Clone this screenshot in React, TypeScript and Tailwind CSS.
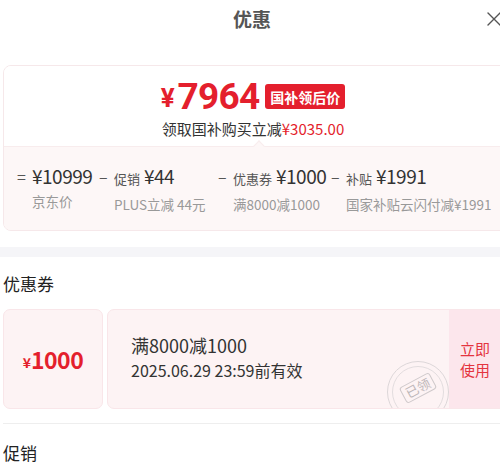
import React from "react";

const items = [
  { sign: "=", label: "", value: "¥10999", sub: "京东价", w: "w-[82px]" },
  { sign: "–", label: "促销", value: "¥44", sub: "PLUS立减 44元", w: "w-[119px]" },
  { sign: "–", label: "优惠券", value: "¥1000", sub: "满8000减1000", w: "w-[113px]" },
  { sign: "–", label: "补贴", value: "¥1991", sub: "国家补贴云闪付减¥1991", w: "w-[160px]" },
];

export default function App() {
  return (
    <div
      className="relative w-[500px] h-[476px] overflow-hidden bg-white"
      style={{ fontFamily: '"Noto Sans CJK SC", "Noto Sans", sans-serif' }}
    >
      {/* header */}
      <div className="relative h-[37px] flex items-center justify-center">
        <span className="text-[19px] font-bold leading-none text-[#555] ml-[4px]">优惠</span>
        <svg
          className="absolute left-[486px] top-[11px]"
          width="16"
          height="16"
          viewBox="0 0 16 16"
          fill="none"
          stroke="#555"
          strokeWidth="1.4"
          strokeLinecap="round"
        >
          <path d="M2 2 L14 14 M14 2 L2 14" />
        </svg>
      </div>

      {/* price card */}
      <div className="mt-[28px] ml-[3px] w-[510px] rounded-[8px] border border-[#f6e8ea] overflow-hidden">
        <div className="h-[80px] bg-white flex flex-col items-center pt-[13px] pr-[10px]">
          <div className="flex items-center h-[35px] font-[Roboto,sans-serif]">
            <span className="text-[#e41f2d] font-bold text-[26px] leading-[25px] mr-[3px] mt-[4px]">¥</span>
            <span className="text-[#e41f2d] font-bold text-[37px] leading-[32px] tracking-[-0.8px]">7964</span>
            <span
              className="ml-[6px] h-[25px] px-[5px] flex items-center rounded-[3px] bg-[#e41f2d] text-white text-[14px] font-bold leading-none"
              style={{ fontFamily: '"Noto Sans CJK SC", sans-serif' }}
            >
              国补领后价
            </span>
          </div>
          <div className="mt-[6px] text-[15px] leading-[18px] text-[#333]">
            领取国补购买立减<span className="text-[#e41f2d]">¥3035.00</span>
          </div>
        </div>
        <div className="relative h-[84px] bg-[#fdf7f7] border-t border-[#f8eced] pt-[17px] pl-[13px]">
          <div className="absolute left-[251px] top-[-5px] w-[8px] h-[8px] rotate-45 bg-[#fdf7f7] border-l border-t border-[#f8eced]" />
          <div className="flex">
            {items.map((it, i) => (
              <div key={i} className={`flex shrink-0 ${it.w}`}>
                <span className="w-[15px] shrink-0 text-[#555] text-[16px] leading-[24px]">{it.sign}</span>
                <div className="flex flex-col">
                  <div className="flex items-baseline whitespace-nowrap leading-[24px]">
                    {it.label && <span className="text-[13px] text-[#555] mr-[4px]">{it.label}</span>}
                    <span className="text-[19px] text-[#333] tracking-[-0.5px]">{it.value}</span>
                  </div>
                  <div className="mt-[4px] text-[13.5px] leading-[18px] text-[#999] whitespace-nowrap">{it.sub}</div>
                </div>
              </div>
            ))}
          </div>
        </div>
      </div>

      {/* gray band */}
      <div className="mt-[16px] h-[10px] bg-[#f5f5f8]" />

      {/* coupon heading */}
      <div className="mt-[17px] pl-[3px] text-[17px] leading-[20px] text-[#222]">优惠券</div>

      {/* coupon */}
      <div className="mt-[15px] ml-[3px] w-[510px] h-[100px] flex">
        <div className="w-[100px] h-full rounded-[7px] bg-[#fdf3f4] border border-[#f9e6e9] flex items-center justify-center">
          <span className="text-[#e41f2d] font-semibold text-[14px] leading-none mt-[5px]">¥</span>
          <span className="text-[#e41f2d] font-semibold text-[23px] leading-none tracking-[-0.5px]">1000</span>
        </div>
        <div className="relative ml-[4px] flex-1 h-full rounded-[7px] bg-[#fdf3f4] border border-[#f9e6e9] overflow-hidden flex">
          <div className="flex-1 pl-[23px] pt-[23px]">
            <div className="text-[18px] leading-[24px] text-[#333]">满8000减1000</div>
            <div className="mt-[3px] text-[16px] leading-[20px] text-[#333]">2025.06.29 23:59前有效</div>
          </div>
          {/* stamp */}
          <div className="absolute left-[279px] top-[51px] w-[62px] h-[62px] rounded-full border-[1.5px] border-[#dcd6d8] flex items-center justify-center">
            <div className="w-[52px] h-[52px] rounded-full border border-[#e2dcde] flex items-center justify-center">
              <div className="-rotate-[28deg] border border-[#cfc9cb] rounded-[3px] px-[3px] text-[13px] leading-[16px] text-[#bdb7b9] mt-[-8px]">
                已领
              </div>
            </div>
          </div>
          <div className="w-[63px] h-full bg-[#fce6ec] flex items-center pl-[11px]">
            <div className="text-[15px] leading-[21px] text-[#e4343f] w-[32px]">立即使用</div>
          </div>
        </div>
      </div>

      {/* divider */}
      <div className="mt-[14px] ml-[3px] h-px bg-[#eeeeee]" />

      {/* promo heading */}
      <div className="mt-[19px] pl-[3px] text-[17px] leading-[20px] text-[#222]">促销</div>
    </div>
  );
}
